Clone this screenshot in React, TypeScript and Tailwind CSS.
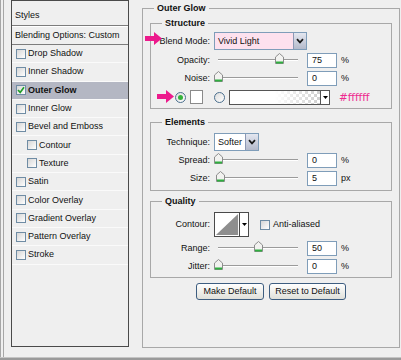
import React from "react";

type Layer = { label: string; checked?: boolean; active?: boolean; indent?: boolean };

const layers: Layer[] = [
  { label: "Drop Shadow" },
  { label: "Inner Shadow" },
  { label: "Outer Glow", checked: true, active: true },
  { label: "Inner Glow" },
  { label: "Bevel and Emboss" },
  { label: "Contour", indent: true },
  { label: "Texture", indent: true },
  { label: "Satin" },
  { label: "Color Overlay" },
  { label: "Gradient Overlay" },
  { label: "Pattern Overlay" },
  { label: "Stroke" },
];

const Checkbox = ({ checked }: { checked?: boolean }) => (
  <span className="flex h-[10px] w-[10px] shrink-0 items-center justify-center border border-[#6f8ca4] bg-linear-to-br from-[#d6d6d6] to-white">
    {checked && (
      <svg width="8" height="8" viewBox="0 0 8 8">
        <path d="M1 4 L3.2 6.4 L7 1.2" fill="none" stroke="#1f9e28" strokeWidth="1.7" />
      </svg>
    )}
  </span>
);

const Radio = ({ on }: { on?: boolean }) => (
  <span className="flex h-[11px] w-[11px] shrink-0 items-center justify-center rounded-full border border-[#4b6f8e] bg-linear-to-br from-[#dcdcdc] to-white">
    {on && <span className="h-[5px] w-[5px] rounded-full bg-[#35b23c]" />}
  </span>
);

const Chevron = () => (
  <svg width="8" height="6" viewBox="0 0 8 6">
    <path d="M1 1.2 L4 4.4 L7 1.2" fill="none" stroke="#1a1a1a" strokeWidth="1.7" />
  </svg>
);

const Thumb = () => (
  <svg width="9" height="11" viewBox="0 0 9 11">
    <path d="M4.5 0.5 L8.5 4 L8.5 10.5 L0.5 10.5 L0.5 4 Z" fill="#f2f2f0" stroke="#8c8c8c" />
    <rect x="1" y="8.5" width="7" height="2" fill="#2fae3f" />
  </svg>
);

const PinkArrow = ({ className }: { className: string }) => (
  <svg className={className} width="17" height="13" viewBox="0 0 17 13">
    <polygon points="0,4 9,4 9,0 17,6.5 9,13 9,9 0,9" fill="#ec1a8c" />
  </svg>
);

type SliderProps = { label: string; value: string; unit: string; pos: number; className?: string };

const SliderRow = ({ label, value, unit, pos, className = "" }: SliderProps) => (
  <div className={`flex h-[16px] items-center ${className}`}>
    <span className="w-[59px] text-right">{label}:</span>
    <div className="relative ml-[4px] h-full w-[93px]">
      <div className="absolute left-[4px] top-[7px] h-[2px] w-[80px] border-y border-t-[#9b9b9b] border-b-white" />
      <div className="absolute top-[1px] flex" style={{ left: 4 + pos * 0.8 - 4.5 }}>
        <Thumb />
      </div>
    </div>
    <span className="flex h-[15px] w-[30px] items-center border border-[#7f9db9] bg-white pl-[4px]">{value}</span>
    <span className="ml-[4px]">{unit}</span>
  </div>
);

const Group = ({ title, className = "", children }: { title: string; className?: string; children: React.ReactNode }) => (
  <fieldset className={`border border-[#a8a8a8] ${className}`}>
    <legend className="ml-[11px] px-[3px] font-bold leading-[14px]">{title}</legend>
    {children}
  </fieldset>
);

export default function App() {
  return (
    <div className="flex h-[360px] w-[401px] flex-col overflow-hidden bg-[#efefef] font-['Liberation_Sans',Arial,sans-serif] text-[9px] leading-none text-[#111]">
      <div className="relative flex h-[357px] border-l-[4px] border-double border-[#a6a6a6] pl-[7px]">
        {/* Left: style list */}
        <div className="flex h-[347px] w-[118px] flex-col border border-[#4a4a4a]">
          <div className="flex h-[25px] items-center border-b border-[#7c7c7c] pl-[3px] pt-[4px]">Styles</div>
          <div className="flex h-[19px] items-center border-y border-t-white border-b-[#7c7c7c] pl-[3px]">
            Blending Options: Custom
          </div>
          {layers.map((layer) => (
            <div
              key={layer.label}
              className={`flex h-[18.3px] items-center gap-[2px] border-b border-[#fafafa] ${
                layer.indent ? "pl-[15px]" : "pl-[4px]"
              } ${layer.active ? "bg-[#b4b7c3] font-bold" : ""}`}
            >
              <Checkbox checked={layer.checked} />
              <span>{layer.label}</span>
            </div>
          ))}
        </div>

        {/* Right: Outer Glow settings */}
        <fieldset className="ml-[13px] h-[348px] w-[258px] border border-[#a8a8a8]">
          <legend className="ml-[11px] px-[3px] font-bold leading-[16px]">Outer Glow</legend>
          <div className="px-[7px]">
            <Group title="Structure" className="pb-[3px]">
              <div className="mt-[2px] flex h-[18px] items-center">
                <span className="w-[59px] text-right">Blend Mode:</span>
                <div className="ml-[4px] flex h-[18px] w-[93px] border border-[#7f9db9] bg-[#fde1ee]">
                  <span className="flex flex-1 items-center pl-[3px]">Vivid Light</span>
                  <span className="flex w-[13px] items-center justify-center border-l border-[#8c98b4] bg-linear-to-b from-[#e4e7f0] to-[#b4bacb]">
                    <Chevron />
                  </span>
                </div>
              </div>
              <SliderRow label="Opacity" value="75" unit="%" pos={77} className="mt-[2px]" />
              <SliderRow label="Noise" value="0" unit="%" pos={0} className="mt-[2px]" />
              <div className="mt-[3px] flex h-[16px] items-center pl-[24px]">
                <Radio on />
                <span className="ml-[4px] h-[14px] w-[13px] border border-[#8a8a8a] bg-white" />
                <span className="ml-[11px]">
                  <Radio />
                </span>
                <div className="ml-[4px] flex h-[15px] w-[101px] border border-[#555] bg-[repeating-conic-gradient(#cfcfcf_0_25%,#ffffff_0_50%)] bg-[length:6px_6px]">
                  <span className="flex-1 bg-linear-to-r from-white via-white to-transparent" />
                  <span className="flex w-[9px] items-center justify-center border-l border-[#555] bg-white">
                    <svg width="5" height="3" viewBox="0 0 5 3">
                      <polygon points="0,0 5,0 2.5,3" fill="#000" />
                    </svg>
                  </span>
                </div>
                <span className="ml-[9px] font-['DejaVu_Sans',sans-serif] text-[10.5px] text-[#ee2a8f]">#ffffff</span>
              </div>
            </Group>

            <Group title="Elements" className="mt-[6px] pb-[4px]">
              <div className="mt-[4px] flex h-[18px] items-center">
                <span className="w-[59px] text-right">Technique:</span>
                <div className="ml-[4px] flex h-[18px] w-[45px] border border-[#7f9db9] bg-white">
                  <span className="flex flex-1 items-center pl-[3px]">Softer</span>
                  <span className="flex w-[13px] items-center justify-center border-l border-[#8c98b4] bg-linear-to-b from-[#e4e7f0] to-[#b4bacb]">
                    <Chevron />
                  </span>
                </div>
              </div>
              <SliderRow label="Spread" value="0" unit="%" pos={0} className="mt-[1px]" />
              <SliderRow label="Size" value="5" unit="px" pos={3} className="mt-[2px]" />
            </Group>

            <Group title="Quality" className="mt-[3px] pb-[3px]">
              <div className="mt-[4px] flex h-[25px] items-center">
                <span className="w-[59px] text-right">Contour:</span>
                <div className="ml-[4px] flex h-[25px] w-[35px] border border-[#4a4a4a] bg-white">
                  <svg className="flex-1" width="25" height="23" viewBox="0 0 25 23" preserveAspectRatio="none">
                    <polygon points="1,22 24,1 24,22" fill="#8e8e8e" />
                  </svg>
                  <span className="flex w-[9px] items-center justify-center border-l border-[#4a4a4a]">
                    <svg width="5" height="3" viewBox="0 0 5 3">
                      <polygon points="0,0 5,0 2.5,3" fill="#000" />
                    </svg>
                  </span>
                </div>
                <span className="ml-[11px]">
                  <Checkbox />
                </span>
                <span className="ml-[3px]">Anti-aliased</span>
              </div>
              <SliderRow label="Range" value="50" unit="%" pos={50} className="mt-[3px]" />
              <SliderRow label="Jitter" value="0" unit="%" pos={0} className="mt-[2px]" />
            </Group>

            <div className="mt-[5px] flex justify-center gap-[5px]">
              <button className="h-[17px] w-[68px] rounded-[3px] border border-[#3d5d80] bg-linear-to-b from-white to-[#e0e0da] text-[9px]">
                Make Default
              </button>
              <button className="h-[17px] w-[77px] rounded-[3px] border border-[#3d5d80] bg-linear-to-b from-white to-[#e0e0da] text-[9px]">
                Reset to Default
              </button>
            </div>
          </div>
        </fieldset>

        <PinkArrow className="absolute left-[141px] top-[32px]" />
        <PinkArrow className="absolute left-[153px] top-[90px]" />
      </div>
      <div className="h-[3px] border-t border-[#c4c4c4] bg-[#9a9a9a]" />
    </div>
  );
}
